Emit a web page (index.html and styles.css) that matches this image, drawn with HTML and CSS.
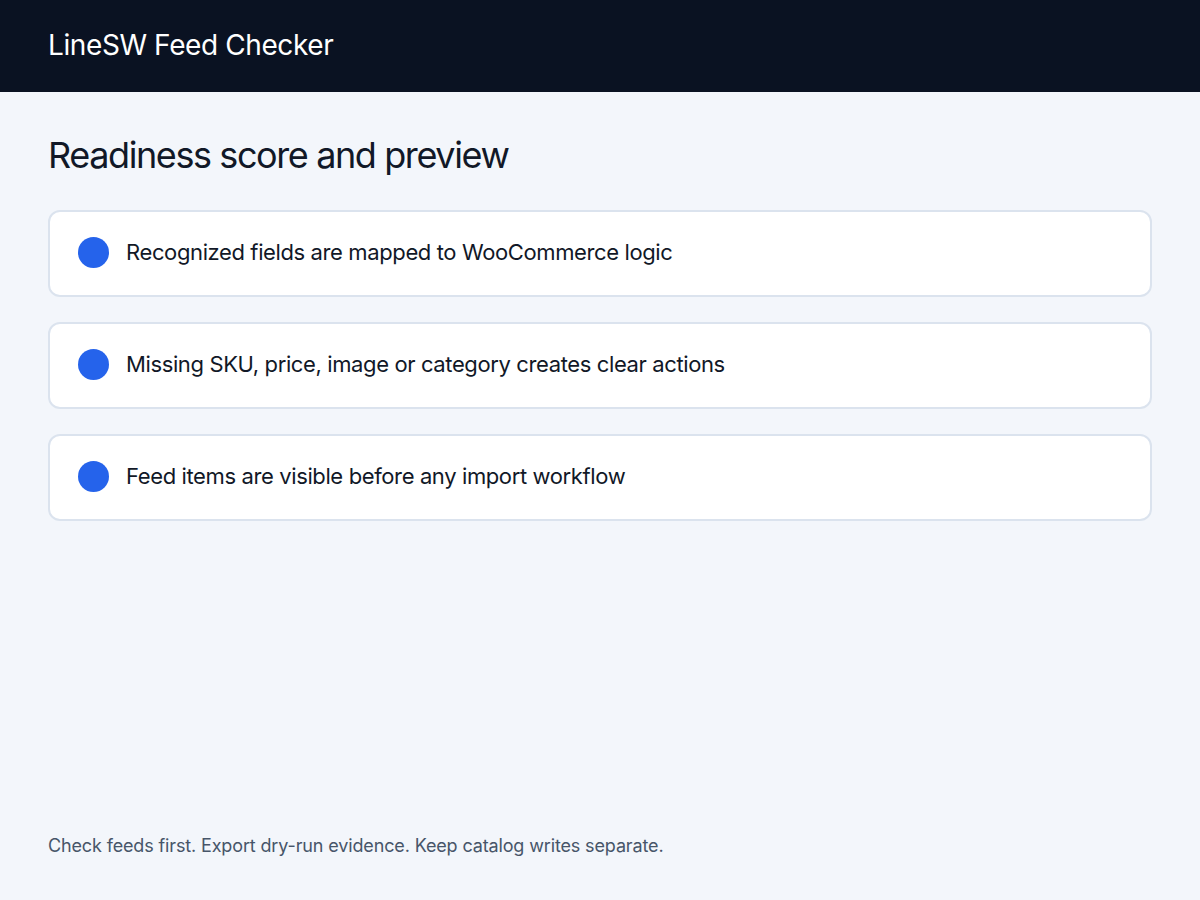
FILE: index.html
```html
<!DOCTYPE html>
<html lang="en">
<head>
<meta charset="utf-8">
<title>LineSW Feed Checker</title>
<link rel="stylesheet" href="styles.css">
</head>
<body>
<div class="page">
  <header class="topbar">
    <div class="brand">LineSW Feed Checker</div>
  </header>
  <main class="content">
    <h1 class="title">Readiness score and preview</h1>
    <ul class="checks">
      <li class="check"><span class="dot"></span><span class="label">Recognized fields are mapped to WooCommerce logic</span></li>
      <li class="check"><span class="dot"></span><span class="label">Missing SKU, price, image or category creates clear actions</span></li>
      <li class="check"><span class="dot"></span><span class="label">Feed items are visible before any import workflow</span></li>
    </ul>
  </main>
  <footer class="foot">Check feeds first. Export dry-run evidence. Keep catalog writes separate.</footer>
</div>
</body>
</html>
```
FILE: styles.css
```css
* { box-sizing: border-box; }
html, body { margin: 0; padding: 0; }
body {
  font-family: Inter, "Noto Sans", "Liberation Sans", sans-serif;
  background: #f3f6fb;
  color: #0f172a;
}
.page {
  min-height: 100vh;
  display: flex;
  flex-direction: column;
}
.topbar {
  background: #0a1222;
  height: 92px;
  padding: 0 48px;
  display: flex;
  align-items: center;
}
.brand {
  color: #ffffff;
  font-size: 28px;
  font-weight: 400;
  letter-spacing: -0.4px;
  padding-bottom: 2px;
}
.content {
  padding: 35px 48px 0;
}
.title {
  margin: 0 0 27px;
  font-size: 36px;
  font-weight: 400;
  line-height: 56px;
  letter-spacing: -1.4px;
  color: #111827;
}
.checks {
  list-style: none;
  margin: 0;
  padding: 0;
  display: flex;
  flex-direction: column;
  gap: 25px;
}
.check {
  display: flex;
  align-items: center;
  gap: 17px;
  height: 87px;
  padding: 0 28px 3px;
  background: #ffffff;
  border: 2px solid #dbe3ee;
  border-radius: 12px;
}
.dot {
  width: 31px;
  height: 31px;
  border-radius: 50%;
  background: #2563eb;
  flex: none;
}
.label {
  font-size: 22px;
  color: #111827;
  letter-spacing: -0.38px;
}
.foot {
  margin-top: auto;
  padding: 0 48px 41px;
  font-size: 18px;
  line-height: 26px;
  color: #475569;
  letter-spacing: -0.14px;
}
```
